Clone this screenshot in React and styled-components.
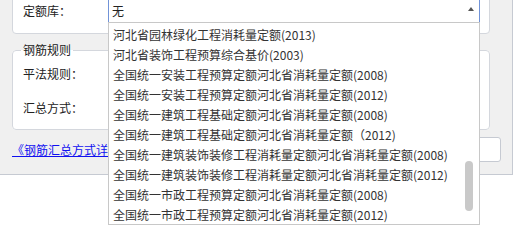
import styled, { createGlobalStyle } from 'styled-components';

const GlobalStyle = createGlobalStyle`
    body {
        margin: 0;
        padding: 0;
        min-height: 232px;
        background: #ffffff;
        font-family: "Noto Sans CJK SC", "Noto Sans", sans-serif;
        font-size: 12px;
        color: #222;
    }
`

const quotaList = [
    '河北省园林绿化工程消耗量定额(2013)',
    '河北省装饰工程预算综合基价(2003)',
    '全国统一安装工程预算定额河北省消耗量定额(2008)',
    '全国统一安装工程预算定额河北省消耗量定额(2012)',
    '全国统一建筑工程基础定额河北省消耗量定额(2008)',
    '全国统一建筑工程基础定额河北省消耗量定额（2012)',
    '全国统一建筑装饰装修工程消耗量定额河北省消耗量定额(2008)',
    '全国统一建筑装饰装修工程消耗量定额河北省消耗量定额(2012)',
    '全国统一市政工程预算定额河北省消耗量定额(2008)',
    '全国统一市政工程预算定额河北省消耗量定额(2012)',
];

const Dialog = styled.div`
    width: 489px;
    margin-top: -10px;
    padding: 0 11px 12px 12px;
    background: #f0f0f0;
    border-right: 1px solid #c6cad2;
    border-bottom: 1px solid #c6cad2;
    display: flex;
    flex-direction: column;
`

const Group = styled.div`
    box-sizing: border-box;
    width: 478px;
    padding: 7px 9px 10px 10px;
    background: #ffffff;
    border: 1px solid #d4d7dd;
    border-radius: 4px;
`

const FieldGroup = styled.fieldset`
    box-sizing: border-box;
    width: 478px;
    margin: 8px 0 0 0;
    padding: 0 9px 9px 8px;
    min-width: 0;
    background: #ffffff;
    border: 1px solid #d4d7dd;
    border-radius: 4px;
`

const Legend = styled.legend`
    padding: 0 2px;
    font-size: 12px;
    line-height: 16px;
    color: #222;
`

const Rows = styled.div`
    display: flex;
    flex-direction: column;
    gap: 10px;
    padding: 4px 0 0 2px;
`

const Row = styled.div`
    display: flex;
    align-items: center;
    height: ${({ $h }) => $h || 24}px;
`

const Label = styled.span`
    width: 85px;
    flex: none;
    line-height: 16px;
    color: #222;
`

const SelectWrap = styled.div`
    position: relative;
    flex: 1;
    height: 100%;
`

const SelectBox = styled.div`
    box-sizing: border-box;
    height: 100%;
    display: flex;
    align-items: center;
    justify-content: space-between;
    padding: 0 5px 0 3px;
    background: #ffffff;
    border: 1px solid ${({ $focus }) => ($focus ? '#7193d8' : '#c9ccd2')};
    border-bottom-color: #c9ccd2;
    color: #222;
`

const Arrow = styled.span`
    width: 0;
    height: 0;
    border-left: 3px solid transparent;
    border-right: 3px solid transparent;
    border-bottom: 4px solid #555;
    margin-bottom: 3px;
`

const Menu = styled.ul`
    position: absolute;
    top: calc(100% - 1px);
    left: 0;
    right: 0;
    height: 203px;
    box-sizing: border-box;
    margin: 0;
    padding: 2px 0 0 0;
    list-style: none;
    overflow: hidden;
    background: #ffffff;
    border: 1px solid #c8c8c8;
    z-index: 10;
`

const MenuItem = styled.li`
    height: 20px;
    line-height: 20px;
    padding-left: 4px;
    white-space: nowrap;
    color: #333;
    font-size: 12px;
`

const Thumb = styled.div`
    position: absolute;
    top: 138px;
    right: 6px;
    width: 8px;
    height: 50px;
    border-radius: 4px;
    background: #c9c9c9;
`

const Footer = styled.div`
    display: flex;
    align-items: center;
    justify-content: space-between;
    margin-top: 7px;
    height: 25px;
`

const DetailLink = styled.a`
    display: block;
    max-width: 96px;
    overflow: hidden;
    white-space: nowrap;
    color: #1010f0;
    text-decoration: underline;
    font-size: 12px;
    line-height: 16px;
    cursor: pointer;
`

const Buttons = styled.div`
    display: flex;
    gap: 8px;
`

const Button = styled.button`
    width: 70px;
    height: 25px;
    font: inherit;
    color: #222;
    background: #ffffff;
    border: 1px solid #c6cad2;
    border-radius: 3px;
`

const App = () => {
    return (
        <>
            <GlobalStyle />
            <Dialog>
                <Group>
                    <Row $h={25}>
                        <Label>定额库：</Label>
                        <SelectWrap>
                            <SelectBox $focus>
                                <span>无</span>
                                <Arrow />
                            </SelectBox>
                            <Menu>
                                {quotaList.map((item) => (
                                    <MenuItem key={item}>{item}</MenuItem>
                                ))}
                                <Thumb />
                            </Menu>
                        </SelectWrap>
                    </Row>
                </Group>
                <FieldGroup>
                    <Legend>钢筋规则</Legend>
                    <Rows>
                        <Row>
                            <Label>平法规则：</Label>
                            <SelectWrap>
                                <SelectBox><span></span><Arrow /></SelectBox>
                            </SelectWrap>
                        </Row>
                        <Row>
                            <Label>汇总方式：</Label>
                            <SelectWrap>
                                <SelectBox><span></span><Arrow /></SelectBox>
                            </SelectWrap>
                        </Row>
                    </Rows>
                </FieldGroup>
                <Footer>
                    <DetailLink>《钢筋汇总方式详细说明》</DetailLink>
                    <Buttons>
                        <Button>确定</Button>
                        <Button>取消</Button>
                    </Buttons>
                </Footer>
            </Dialog>
        </>
    )
}

export default App;
